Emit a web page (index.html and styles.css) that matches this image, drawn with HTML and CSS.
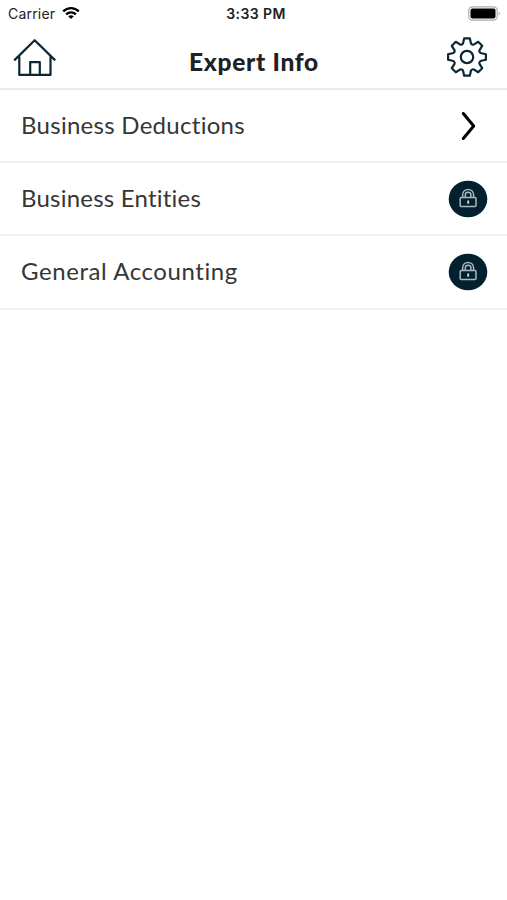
FILE: index.html
```html
<!DOCTYPE html>
<html lang="en">
<head>
<meta charset="utf-8">
<title>Expert Info</title>
<link rel="stylesheet" href="styles.css">
</head>
<body>
<div class="status">
  <div class="carrier"><span>Carrier</span>
    <svg width="18" height="13" viewBox="0 0 18 13" fill="none" stroke="#000" stroke-width="2.3"><path d="M1.2 4.4C5.7.1 12.3.1 16.8 4.4M4.1 7.4c2.9-2.6 6.9-2.6 9.8 0"/><path d="M9 12 6.2 9.3c1.7-1.3 3.9-1.3 5.6 0z" fill="#000" stroke="none"/></svg>
  </div>
  <span class="time">3:33 PM</span>
  <svg class="battery" width="33" height="16" viewBox="0 0 33 16"><rect x=".8" y=".8" width="28.4" height="13.4" rx="3.6" fill="#fff" stroke="#aaa" stroke-width="1.2"/><rect x="2.5" y="2.5" width="25" height="10" rx="2" fill="#000"/><path d="M30.7 5.4c1.6.9 1.6 3.3 0 4.2z" fill="#aaa"/></svg>
</div>
<header class="bar">
  <svg class="home" width="44" height="40" viewBox="0 0 44 40" fill="none" stroke="#0b2736" stroke-width="2.2" stroke-linejoin="round"><path d="M1.2 22.4 21.7 2.2l20.5 20.2M6.3 18.5v18.4h31.2V18.5M17.2 36.9V24.1h9.6v12.8"/></svg>
  <h1>Expert Info</h1>
  <svg class="gear" width="42" height="42" viewBox="-21 -21 42 42" fill="none" stroke="#0b2736" stroke-width="2.2" stroke-linejoin="round"><path d="M-4-13.5-2.8-18.7H2.8L4-13.5Q5.4-11.8 6.7-12.4L11.2-15.2 15.2-11.2 12.4-6.7Q11.8-5.4 13.5-4L18.9-2.8V2.8L13.5 4Q11.8 5.4 12.4 6.7L15.2 11.2 11.2 15.2 6.7 12.4Q5.4 11.8 4 13.5L2.8 18.7H-2.8L-4 13.5Q-5.4 11.8-6.7 12.4L-11.2 15.2-15.2 11.2-12.4 6.7Q-11.8 5.4-13.5 4L-18.9 2.8V-2.8L-13.5-4Q-11.8-5.4-12.4-6.7L-15.2-11.2-11.2-15.2-6.7-12.4Q-5.4-11.8-4-13.5z"/><circle r="6.2"/></svg>
</header>
<main>
  <div class="row"><span class="deductions">Business Deductions</span>
    <svg class="chevron" width="16" height="30" viewBox="0 0 16 30" fill="none" stroke="#000" stroke-width="3" stroke-linecap="round" stroke-linejoin="round"><path d="M2.3 2.5 12.7 15 2.3 27.5"/></svg>
  </div>
  <div class="row"><span class="entities">Business Entities</span>
    <svg width="40" height="38" viewBox="0 0 40 38"><ellipse cx="20" cy="19" rx="19.3" ry="18.3" fill="#03202f"/><g fill="none" stroke="#a9b7bf" stroke-width="1.5"><rect x="12.2" y="17.6" width="15.8" height="9" rx="1"/><path d="M14.6 17.4v-2.4c0-7.4 11-7.4 11 0v2.4M17.3 17.4v-2.4c0-3.6 5.6-3.6 5.6 0v2.4"/></g><path d="M19.3 20.5h1.8v3.2h-1.8z" fill="#dce3e6"/></svg>
  </div>
  <div class="row"><span class="accounting">General Accounting</span>
    <svg width="40" height="38" viewBox="0 0 40 38"><ellipse cx="20" cy="19" rx="19.3" ry="18.3" fill="#03202f"/><g fill="none" stroke="#a9b7bf" stroke-width="1.5"><rect x="12.2" y="17.6" width="15.8" height="9" rx="1"/><path d="M14.6 17.4v-2.4c0-7.4 11-7.4 11 0v2.4M17.3 17.4v-2.4c0-3.6 5.6-3.6 5.6 0v2.4"/></g><path d="M19.3 20.5h1.8v3.2h-1.8z" fill="#dce3e6"/></svg>
  </div>
</main>
</body>
</html>
```
FILE: styles.css
```css
* { box-sizing: border-box; }
body { margin: 0; min-height: 100vh; background: #fff; color: #363636; font-family: Lato, sans-serif; }
svg { display: block; flex: none; }
.status { height: 28px; padding: 0 6px 0 8px; display: grid; grid-template-columns: 1fr auto 1fr; align-items: center; font: 14px/28px Inter, sans-serif; color: #222; }
.carrier { display: flex; align-items: center; gap: 7px; letter-spacing: .2px; }
.carrier svg { margin-top: -1px; }
.time { font-weight: 600; letter-spacing: .4px; padding-left: 3px; }
.battery { justify-self: end; margin-top: -1px; }
.bar { height: 62px; border-bottom: 2px solid #eaeaea; padding: 0 19px 2px 13px; display: grid; grid-template-columns: 1fr auto 1fr; align-items: center; }
.home { margin-top: 1px; }
.gear { justify-self: end; }
h1 { margin: 9px 0 0; padding-left: 7px; font-size: 24.5px; line-height: 30px; font-weight: 900; letter-spacing: .7px; color: #202122; }
.row { height: 73.2px; padding: 0 19px 0 21px; border-bottom: 2px solid #f0f0f0; display: flex; align-items: center; justify-content: space-between; font-size: 24px; line-height: 30px; white-space: nowrap; }
.row span { margin-top: -2px; }
.chevron { margin-right: 11px; }
.deductions { letter-spacing: .28px; }
.entities { letter-spacing: .22px; }
.accounting { letter-spacing: .57px; }
```
